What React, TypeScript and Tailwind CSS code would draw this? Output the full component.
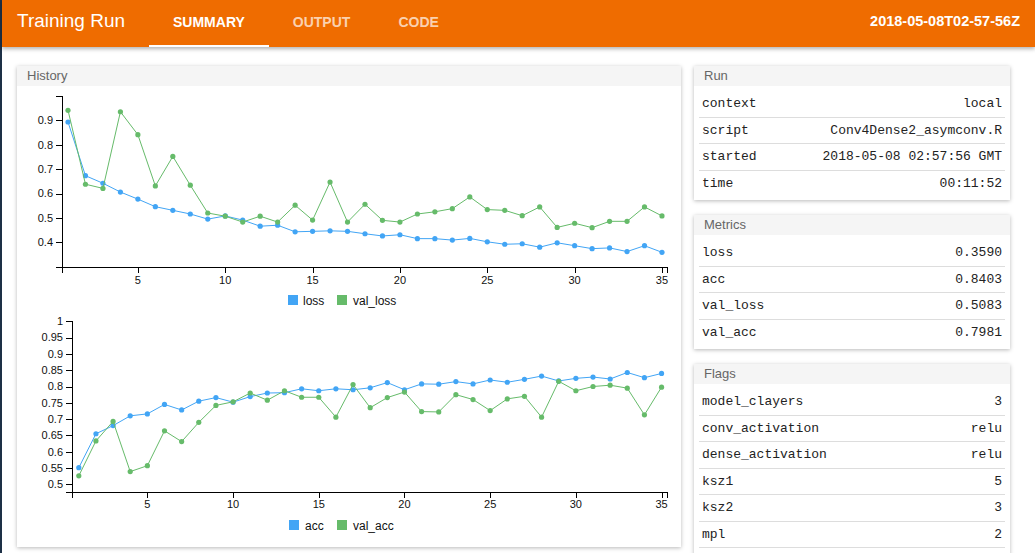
import React from 'react';

const loss = [0.893, 0.673, 0.642, 0.606, 0.577, 0.546, 0.531, 0.516, 0.495, 0.508, 0.491, 0.466, 0.47, 0.443, 0.445, 0.447, 0.445, 0.435, 0.426, 0.431, 0.415, 0.415, 0.409, 0.416, 0.402, 0.392, 0.394, 0.38, 0.398, 0.386, 0.374, 0.377, 0.362, 0.386, 0.359];
const valLoss = [0.941, 0.638, 0.621, 0.935, 0.841, 0.631, 0.752, 0.634, 0.52, 0.507, 0.483, 0.507, 0.483, 0.552, 0.491, 0.647, 0.483, 0.556, 0.49, 0.483, 0.516, 0.525, 0.538, 0.586, 0.534, 0.531, 0.509, 0.545, 0.461, 0.478, 0.46, 0.486, 0.486, 0.545, 0.508];
const acc = [0.551, 0.655, 0.68, 0.71, 0.716, 0.745, 0.728, 0.755, 0.766, 0.752, 0.769, 0.78, 0.781, 0.793, 0.787, 0.793, 0.79, 0.796, 0.812, 0.79, 0.808, 0.807, 0.815, 0.808, 0.82, 0.813, 0.822, 0.832, 0.817, 0.825, 0.829, 0.823, 0.843, 0.827, 0.84];
const valAcc = [0.526, 0.633, 0.693, 0.539, 0.557, 0.664, 0.631, 0.69, 0.742, 0.753, 0.78, 0.758, 0.787, 0.767, 0.767, 0.706, 0.806, 0.735, 0.766, 0.783, 0.723, 0.722, 0.775, 0.76, 0.726, 0.762, 0.77, 0.706, 0.816, 0.787, 0.8, 0.804, 0.795, 0.713, 0.798];

const BLUE = '#42a5f5';
const GREEN = '#66bb6a';

type ChartProps = {
  height: number;
  left: number;
  right: number;
  top: number;
  bottom: number;
  x: (e: number) => number;
  y: (v: number) => number;
  yTicks: number[];
  xLabelY: number;
  legendY: number;
  series: { name: string; color: string; data: number[]; rectX: number; textX: number }[];
};

const Chart: React.FC<ChartProps> = ({ height, left, right, top, bottom, x, y, yTicks, xLabelY, legendY, series }) => {
  const xTicks = [5, 10, 15, 20, 25, 30, 35];
  return (
    <svg width={664} height={height} className="block text-[11px]">
      {/* axes */}
      <g stroke="#000" fill="none" shapeRendering="crispEdges">
        <path d={`M${left - 6},${top} H${left} V${bottom} H${left - 6}`} />
        <path d={`M${left},${bottom + 6} V${bottom} H${right} V${bottom + 6}`} />
        {yTicks.map(t => (
          <line key={t} x1={left - 6} x2={left} y1={Math.round(y(t))} y2={Math.round(y(t))} />
        ))}
        {xTicks.map(t => (
          <line key={t} x1={Math.round(x(t))} x2={Math.round(x(t))} y1={bottom} y2={bottom + 6} />
        ))}
      </g>
      <g fill="#111">
        {yTicks.map(t => (
          <text key={t} x={left - 9} y={y(t)} dy="0.35em" textAnchor="end">
            {String(Number(t.toFixed(2)))}
          </text>
        ))}
        {xTicks.map(t => (
          <text key={t} x={x(t)} y={xLabelY} textAnchor="middle">
            {t}
          </text>
        ))}
      </g>
      {series.map(s => (
        <g key={s.name}>
          <polyline
            fill="none"
            stroke={s.color}
            strokeWidth={1}
            points={s.data.map((v, i) => `${x(i + 1)},${y(v)}`).join(' ')}
          />
          {s.data.map((v, i) => (
            <circle key={i} cx={x(i + 1)} cy={y(v)} r={2.6} fill={s.color} />
          ))}
        </g>
      ))}
      {series.map(s => (
        <g key={s.name + '-legend'}>
          <rect x={s.rectX} y={legendY} width={10} height={10} fill={s.color} />
          <text x={s.textX} y={legendY + 9.5} fontSize={12} fill="#111">
            {s.name}
          </text>
        </g>
      ))}
    </svg>
  );
};

const Card: React.FC<{ title: string; className?: string; children: React.ReactNode }> = ({ title, className, children }) => (
  <div className={`bg-white shadow-[0_1px_4px_rgba(0,0,0,0.28)] ${className ?? ''}`}>
    <div className="h-[20px] bg-[#f5f5f5] px-[10px] text-[13px] leading-[20px] text-[#666]">{title}</div>
    {children}
  </div>
);

const KeyValueCard: React.FC<{ title: string; rows: [string, string][] }> = ({ title, rows }) => (
  <Card title={title}>
    <div className="px-[5px] py-1 font-['Liberation_Mono',monospace] text-[13px] text-[#222]">
      {rows.map(([k, v], i) => (
        <div
          key={k}
          className={`flex h-[26.5px] items-center justify-between px-[3px] ${i > 0 ? 'border-t border-[#ddd]' : ''}`}
        >
          <span>{k}</span>
          <span>{v}</span>
        </div>
      ))}
    </div>
  </Card>
);

const App: React.FC = () => {
  const tabs = ['SUMMARY', 'OUTPUT', 'CODE'];

  return (
    <div className="flex min-h-screen bg-white font-['Liberation_Sans',Arial,sans-serif]">
      <div className="w-[2px] shrink-0 self-stretch bg-[#1d3046]" />
      <div className="flex-1">
        {/* Header */}
        <header className="relative z-10 flex h-[47px] items-stretch bg-[#ef6c00] text-white shadow-[0_2px_4px_rgba(0,0,0,0.3)]">
          <div className="flex w-[147px] shrink-0 items-center pb-[4px] pl-[15px] text-[19px]">Training Run</div>
          <nav className="flex">
            {tabs.map((t, i) => (
              <div
                key={t}
                className={`flex items-center border-b-2 px-6 pb-[1px] text-[14px] font-bold ${
                  i === 0 ? 'border-white text-white' : 'border-transparent text-white/70'
                }`}
              >
                {t}
              </div>
            ))}
          </nav>
          <div className="ml-auto flex items-center pb-[3px] pr-[15px] text-[14.5px] font-bold">2018-05-08T02-57-56Z</div>
        </header>

        {/* Content */}
        <main className="flex items-start gap-[13px] pl-[15px] pt-[19px]">
          <Card title="History" className="w-[664px] shrink-0 pb-[7px]">
            <Chart
              height={226}
              left={45}
              right={650}
              top={10}
              bottom={181}
              x={e => 51 + (e - 1) * 17.47}
              y={v => 156.3 - (v - 0.4) * 244}
              yTicks={[0.4, 0.5, 0.6, 0.7, 0.8, 0.9]}
              xLabelY={198}
              legendY={209}
              series={[
                { name: 'loss', color: BLUE, data: loss, rectX: 271, textX: 286 },
                { name: 'val_loss', color: GREEN, data: valLoss, rectX: 320, textX: 336 },
              ]}
            />
            <Chart
              height={228}
              left={55}
              right={650}
              top={9}
              bottom={180}
              x={e => 61.8 + (e - 1) * 17.14}
              y={v => 172.3 - (v - 0.5) * 326}
              yTicks={[0.5, 0.55, 0.6, 0.65, 0.7, 0.75, 0.8, 0.85, 0.9, 0.95, 1]}
              xLabelY={196}
              legendY={208}
              series={[
                { name: 'acc', color: BLUE, data: acc, rectX: 272, textX: 288 },
                { name: 'val_acc', color: GREEN, data: valAcc, rectX: 320, textX: 336 },
              ]}
            />
          </Card>

          <div className="flex w-[316px] shrink-0 flex-col gap-[15px]">
            <KeyValueCard
              title="Run"
              rows={[
                ['context', 'local'],
                ['script', 'Conv4Dense2_asymconv.R'],
                ['started', '2018-05-08 02:57:56 GMT'],
                ['time', '00:11:52'],
              ]}
            />
            <KeyValueCard
              title="Metrics"
              rows={[
                ['loss', '0.3590'],
                ['acc', '0.8403'],
                ['val_loss', '0.5083'],
                ['val_acc', '0.7981'],
              ]}
            />
            <KeyValueCard
              title="Flags"
              rows={[
                ['model_clayers', '3'],
                ['conv_activation', 'relu'],
                ['dense_activation', 'relu'],
                ['ksz1', '5'],
                ['ksz2', '3'],
                ['mpl', '2'],
                ['mp2', '2'],
                ['dropout', '0.25'],
              ]}
            />
          </div>
        </main>
      </div>
    </div>
  );
};

export default App;
